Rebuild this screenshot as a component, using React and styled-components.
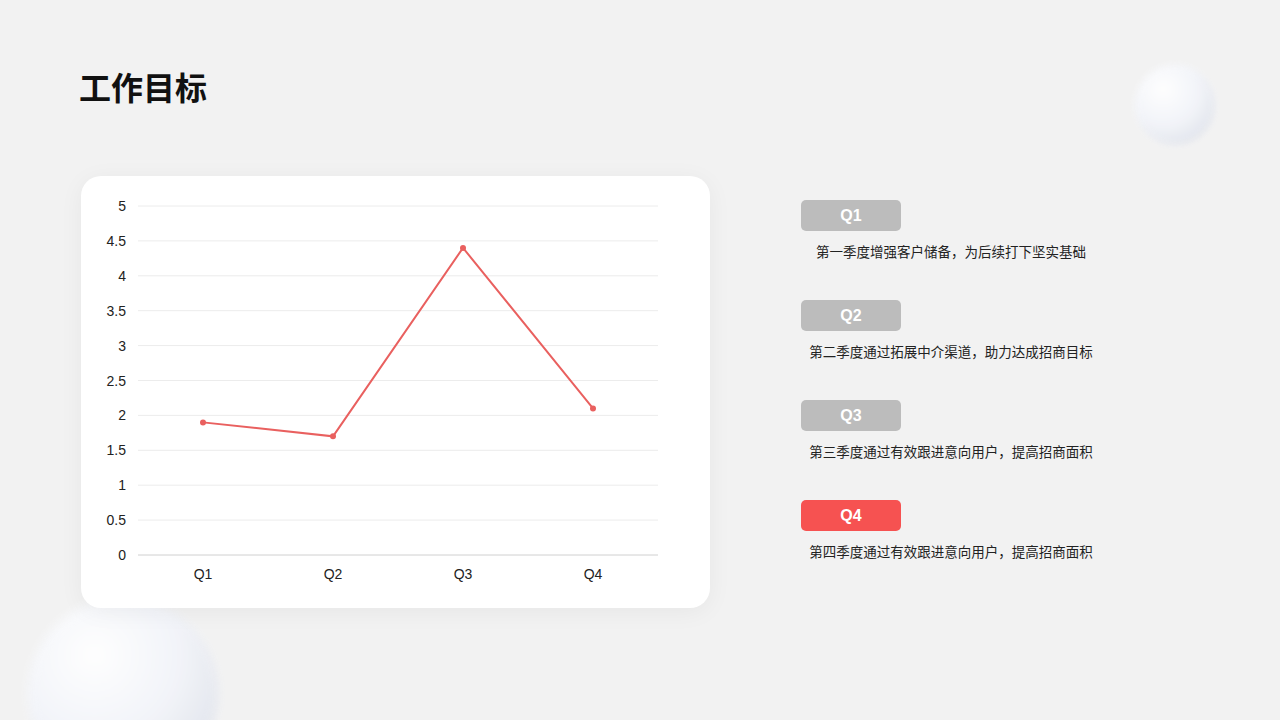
import React from 'react';
import styled, { createGlobalStyle } from 'styled-components';

const Global = createGlobalStyle`
  html, body { margin: 0; padding: 0; }
  body { background: #f2f2f2; font-family: "Liberation Sans", "Noto Sans CJK SC", sans-serif; }
`;

const Page = styled.div`
  position: relative;
  width: 1280px;
  height: 720px;
  overflow: hidden;
  background: #f2f2f2;
`;

const Title = styled.h1`
  margin: 0;
  padding: 66px 0 0 79px;
  font-size: 32px;
  font-weight: 700;
  color: #111;
  font-family: "Noto Sans CJK SC", sans-serif;
  line-height: 40px;
`;

const Body = styled.div`
  display: flex;
  padding: 70px 0 0 81px;
  gap: 91px;
`;

const Card = styled.div`
  position: relative;
  z-index: 1;
  width: 629px;
  height: 432px;
  background: #fff;
  border-radius: 20px;
  box-shadow: 0 4px 24px rgba(0, 0, 0, 0.05);
`;

const List = styled.div`
  display: flex;
  flex-direction: column;
  gap: 40px;
  padding-top: 24px;
  width: 300px;
`;

const Item = styled.div`
  display: flex;
  flex-direction: column;
  gap: 11px;
`;

const Badge = styled.div`
  width: 100px;
  height: 31px;
  border-radius: 5px;
  background: ${({ $active }) => ($active ? '#f65251' : '#bcbcbc')};
  color: #fff;
  font-weight: 700;
  font-size: 16px;
  display: flex;
  align-items: center;
  justify-content: center;
`;

const Desc = styled.div`
  font-size: 13.5px;
  color: #222;
  text-align: center;
  line-height: 18px;
  height: 18px;
  font-family: "Noto Sans CJK SC", sans-serif;
`;

const Sphere = styled.div`
  position: absolute;
  border-radius: 50%;
  left: ${({ $x }) => $x}px;
  top: ${({ $y }) => $y}px;
  width: ${({ $d }) => $d}px;
  height: ${({ $d }) => $d}px;
  background: radial-gradient(circle at 35% 30%, #ffffff 0%, #f3f5fa 45%, #e3e6ee 75%, #ddd8d2 100%);
  filter: blur(${({ $blur }) => $blur}px);
  opacity: 0.95;
`;

const values = [1.9, 1.7, 4.4, 2.1];
const xs = [122, 252, 382, 512];
const yOf = (v) => 379 - v * 69.8;

const Chart = () => (
  <svg width="629" height="432" style={{ display: 'block' }}>
    {Array.from({ length: 11 }, (_, i) => {
      const v = i * 0.5;
      const y = yOf(v);
      return (
        <g key={i}>
          <line x1="57" x2="577" y1={y} y2={y} stroke={i === 0 ? '#d0d0d0' : '#ececec'} strokeWidth="1" />
          <text x="45" y={y + 5} textAnchor="end" fontSize="14" fill="#222" fontFamily="Liberation Sans, sans-serif">{v}</text>
        </g>
      );
    })}
    <polyline
      points={values.map((v, i) => `${xs[i]},${yOf(v)}`).join(' ')}
      fill="none"
      stroke="#e9605f"
      strokeWidth="2"
    />
    {values.map((v, i) => (
      <circle key={i} cx={xs[i]} cy={yOf(v)} r="3" fill="#e9605f" />
    ))}
    {xs.map((x, i) => (
      <text key={i} x={x} y="403" textAnchor="middle" fontSize="14" fill="#222" fontFamily="Liberation Sans, sans-serif">Q{i + 1}</text>
    ))}
  </svg>
);

const items = [
  { q: 'Q1', text: '第一季度增强客户储备，为后续打下坚实基础' },
  { q: 'Q2', text: '第二季度通过拓展中介渠道，助力达成招商目标' },
  { q: 'Q3', text: '第三季度通过有效跟进意向用户，提高招商面积' },
  { q: 'Q4', text: '第四季度通过有效跟进意向用户，提高招商面积', active: true },
];

export default function App() {
  return (
    <Page>
      <Global />
      <Sphere $x={1135} $y={65} $d={80} $blur={3} />
      <Sphere $x={28} $y={598} $d={190} $blur={5} />
      <Title>工作目标</Title>
      <Body>
        <Card>
          <Chart />
        </Card>
        <List>
          {items.map((it) => (
            <Item key={it.q}>
              <Badge $active={it.active}>{it.q}</Badge>
              <Desc>{it.text}</Desc>
            </Item>
          ))}
        </List>
      </Body>
    </Page>
  );
}
